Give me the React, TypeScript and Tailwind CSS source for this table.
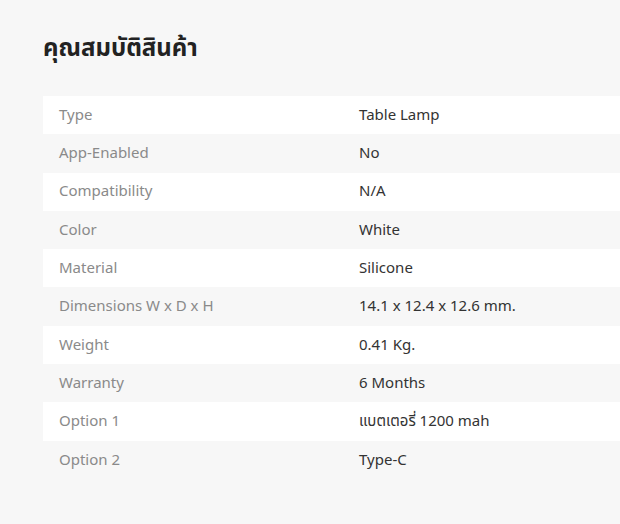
const specs: [string, string][] = [
  ["Type", "Table Lamp"],
  ["App-Enabled", "No"],
  ["Compatibility", "N/A"],
  ["Color", "White"],
  ["Material", "Silicone"],
  ["Dimensions W x D x H", "14.1 x 12.4 x 12.6 mm."],
  ["Weight", "0.41 Kg."],
  ["Warranty", "6 Months"],
  ["Option 1", "แบตเตอรี่ 1200 mah"],
  ["Option 2", "Type-C"],
];

export default function App() {
  return (
    <div
      className="min-h-[524px] w-[620px] overflow-hidden bg-[#f7f7f7] pl-[43px] pt-[31px]"
      style={{ fontFamily: '"Noto Sans", "Noto Sans Thai", sans-serif' }}
    >
      <h2 className="text-[24px] font-bold leading-[32px] text-[#222]">คุณสมบัติสินค้า</h2>
      <div className="mt-[33px]">
        {specs.map(([label, value], i) => (
          <div
            key={label}
            className={`flex h-[38.3px] items-center pb-[2px] text-[15px] ${i % 2 === 0 ? "bg-white" : ""}`}
          >
            <div className="w-[300px] px-4 text-[#8a8a8a]">{label}</div>
            <div className="px-4 text-[#333]">{value}</div>
          </div>
        ))}
      </div>
    </div>
  );
}
